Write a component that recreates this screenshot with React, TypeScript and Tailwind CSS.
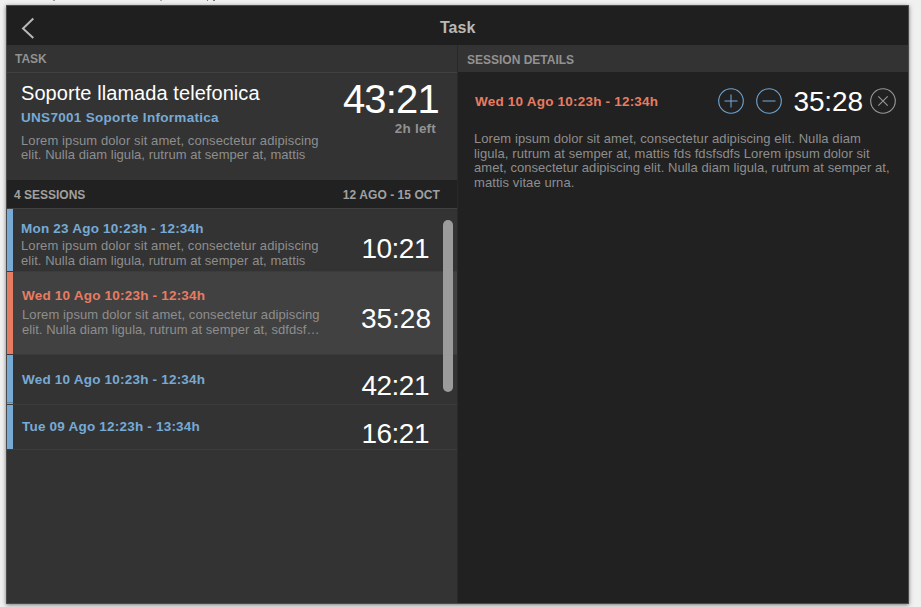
import React from "react";

type Session = {
  title: string;
  time: string;
  lines?: string[];
  active?: boolean;
  row: string;
  body: string;
  timeBox: string;
};

const sessions: Session[] = [
  {
    title: "Mon 23 Ago 10:23h - 12:34h",
    time: "10:21",
    lines: ["Lorem ipsum dolor sit amet, consectetur adipiscing", "elit. Nulla diam ligula, rutrum at semper at, mattis"],
    row: "h-[63px]",
    body: "pt-[13px] pl-[8px]",
    timeBox: "pt-[26px] pr-[28px] tracking-[-0.5px]",
  },
  {
    title: "Wed 10 Ago 10:23h - 12:34h",
    time: "35:28",
    lines: ["Lorem ipsum dolor sit amet, consectetur adipiscing", "elit. Nulla diam ligula, rutrum at semper at, sdfdsf…"],
    active: true,
    row: "h-[83px]",
    body: "pt-[17px] pl-[9px]",
    timeBox: "pt-[33px] pr-[26px]",
  },
  {
    title: "Wed 10 Ago 10:23h - 12:34h",
    time: "42:21",
    row: "h-[50px]",
    body: "pt-[18px] pl-[9px]",
    timeBox: "pt-[17px] pr-[28px] tracking-[-0.5px]",
  },
  {
    title: "Tue 09 Ago 12:23h - 13:34h",
    time: "16:21",
    row: "h-[45px]",
    body: "pt-[15px] pl-[9px]",
    timeBox: "pt-[15px] pr-[28px] tracking-[-0.5px]",
  },
];

function RoundButton({ kind }: { kind: "plus" | "minus" | "close" }) {
  const color = kind === "close" ? "#989898" : "#6fa3cf";
  return (
    <button className="block size-[26px] shrink-0">
      <svg width="26" height="26" viewBox="0 0 26 26" fill="none" stroke={color} strokeWidth="1.1">
        <circle cx="13" cy="13" r="12.3" />
        {kind !== "close" && <path d="M6.5 13H19.5" />}
        {kind === "plus" && <path d="M13 6.5V19.5" />}
        {kind === "close" && <path d="M8.3 8.3L17.7 17.7M17.7 8.3L8.3 17.7" />}
      </svg>
    </button>
  );
}

function SessionRow({ s }: { s: Session }) {
  return (
    <div className={`flex border-b ${s.row} ${s.active ? "border-[#393939] bg-[#414141]" : "border-[#3c3c3c] bg-[#333333]"}`}>
      <div className={`w-[6px] shrink-0 ${s.active ? "bg-[#e87c61]" : "bg-[#77aad5]"}`} />
      <div className={`flex-1 ${s.body}`}>
        <h3 className={`text-[13.5px] leading-[14px] font-bold tracking-[0.21px] ${s.active ? "text-[#e87c61]" : "text-[#77aad5]"}`}>{s.title}</h3>
        {s.lines && (
          <p className={`text-[13px] leading-[15px] text-[#8e8e8e] ${s.active ? "mt-[4px]" : "mt-[2px]"}`}>
            {s.lines.map((l, i) => (
              <span key={l} className={`block ${i === 0 ? "tracking-[0.1px]" : "tracking-[0.05px]"}`}>{l}</span>
            ))}
          </p>
        )}
      </div>
      <div className={`text-[28px] leading-[28px] text-white ${s.timeBox}`}>{s.time}</div>
    </div>
  );
}

export default function App() {
  return (
    <div className="relative h-[607px] w-[921px] overflow-hidden bg-[#f0f0f0] pt-[5px] pl-[6px] font-['Liberation_Sans',Arial,sans-serif] whitespace-nowrap">
      <div className="absolute top-0 left-[53px] h-px w-[2px] bg-[#999999]" />
      <div className="absolute top-0 left-[160px] h-px w-[2px] bg-[#aaaaaa]" />
      <div className="absolute top-0 left-[207px] h-px w-px bg-[#777777]" />
      <div className="absolute top-0 left-[213px] h-px w-[2px] bg-[#777777]" />

      <main className="flex h-[599px] w-[903px] flex-col border border-[#4b4b4b] bg-[#212121] shadow-[0_1px_4px_rgba(0,0,0,0.5)]">
        <header className="flex h-[39px] shrink-0 items-center bg-[#1f1f1f] pt-[4px]">
          <svg className="ml-[14px]" width="14" height="22" viewBox="0 0 14 22" fill="none" stroke="#b8b8b8" strokeWidth="2">
            <path d="M12.3 1.5L2 11.5L12.3 21" />
          </svg>
          <h1 className="ml-[405px] text-[16px] leading-[18px] font-bold text-[#b8b8b8]">Task</h1>
        </header>

        <div className="flex flex-1">
          <section className="w-[451px] border-r border-[#292929] bg-[#333333]">
            <h2 className="h-[28px] border-b border-[#414141] pt-[7px] pl-[8px] text-[12px] leading-[14px] font-bold text-[#929292]">TASK</h2>
            <div className="flex h-[107px] justify-between pr-[18px] pl-[14px]">
              <div className="pt-[8px]">
                <h2 className="text-[20px] leading-[24px] tracking-[0.07px] text-white">Soporte llamada telefonica</h2>
                <h3 className="mt-[6px] text-[13.5px] leading-[14px] font-bold tracking-[0.3px] text-[#77aad5]">UNS7001 Soporte Informatica</h3>
                <p className="mt-[9px] text-[13px] leading-[14px] tracking-[0.1px] text-[#8e8e8e]">
                  Lorem ipsum dolor sit amet, consectetur adipiscing<br />
                  <span className="tracking-[0.05px]">elit. Nulla diam ligula, rutrum at semper at, mattis</span>
                </p>
              </div>
              <div className="pt-[5px] text-right">
                <div className="text-[40px] leading-[42px] tracking-[-0.8px] text-white">43:21</div>
                <div className="mt-[2px] pr-[3px] text-[13.5px] leading-[14px] font-bold tracking-[0.2px] text-[#929292]">2h left</div>
              </div>
            </div>
            <div className="flex h-[29px] justify-between border-b border-[#414141] bg-[#212121] pt-[8px] pr-[17px] pl-[7px] text-[12px] leading-[14px] font-bold text-[#a0a0a0]">
              <span>4 SESSIONS</span>
              <span className="tracking-[0.06px]">12 AGO - 15 OCT</span>
            </div>
            <div className="relative">
              {sessions.map((s, i) => (
                <SessionRow key={i} s={s} />
              ))}
              <div className="absolute top-[193px] left-0 h-px w-[6px] bg-[#6089ab]" />
              <div className="absolute top-[11px] right-[4px] h-[172px] w-[10px] rounded-full bg-[#9b9b9b]" />
            </div>
          </section>

          <section className="flex-1">
            <h2 className="h-[27px] bg-[#333333] pt-[8px] pl-[9px] text-[12px] leading-[14px] font-bold text-[#929292]">SESSION DETAILS</h2>
            <div className="flex items-center pt-[14px] pr-[12px] pl-[17px]">
              <h3 className="flex-1 pt-px text-[13.5px] leading-[14px] font-bold tracking-[0.21px] text-[#e87c61]">Wed 10 Ago 10:23h - 12:34h</h3>
              <RoundButton kind="plus" />
              <div className="w-[12px]" />
              <RoundButton kind="minus" />
              <div className="ml-[11px] pt-[2px] text-[28px] leading-[28px] tracking-[-0.1px] text-white">35:28</div>
              <div className="w-[7px]" />
              <RoundButton kind="close" />
            </div>
            <p className="mt-[16px] pl-[16px] text-[13px] leading-[14.6px] tracking-[0.08px] text-[#8e8e8e]">
              Lorem ipsum dolor sit amet, consectetur adipiscing elit. Nulla diam<br />
              ligula, rutrum at semper at, mattis fds fdsfsdfs Lorem ipsum dolor sit<br />
              <span className="tracking-[0.05px]">amet, consectetur adipiscing elit. Nulla diam ligula, rutrum at semper at,</span><br />
              mattis vitae urna.
            </p>
          </section>
        </div>
      </main>
    </div>
  );
}
